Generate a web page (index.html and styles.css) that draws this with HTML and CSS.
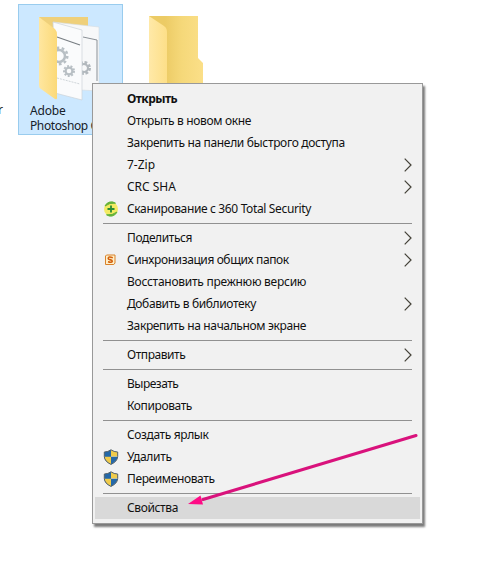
FILE: index.html
```html
<!DOCTYPE html>
<html lang="ru">
<head>
<meta charset="utf-8">
<title>Контекстное меню</title>
<link rel="stylesheet" href="styles.css">
</head>
<body>
<main class="desktop">
  <span class="cut-label">r</span>
  <section class="file selected">
    <svg class="folder-open" width="64" height="88" viewBox="0 0 64 88">
      <defs>
        <linearGradient id="flap" x1="0" x2="1"><stop offset="0" stop-color="#ffe7a0"/><stop offset="1" stop-color="#fbd978"/></linearGradient>
      </defs>
      <path d="M1 3H50V28H1Z" fill="#efd07a"/>
      <path d="M15 8L61 13V77L43 76Z" fill="#f7f8f9" stroke="#d5dbe0" stroke-width=".6"/>
      <path d="M45 23L59 26V67" fill="none" stroke="#8a9096" stroke-width="1"/>
      <circle cx="46" cy="54" r="5" fill="none" stroke="#b2b8bd" stroke-width="4" stroke-dasharray="2.4 1.5"/>
      <circle cx="46" cy="54" r="4" fill="none" stroke="#b2b8bd" stroke-width="2"/>
      <path d="M15 8L44 16V86L17 79Z" fill="#fafbfc" stroke="#ccd3d9" stroke-width=".7"/>
      <path d="M19 23L42 31" stroke="#777d82" stroke-width="1.3"/>
      <path d="M19 64L42 70" stroke="#cfd5d9" stroke-dasharray="2 1"/>
      <g fill="none" stroke="#b8bfc4">
        <circle cx="21" cy="42" r="6" stroke-width="2.5"/><circle cx="21" cy="42" r="8.3" stroke-width="2.5" stroke-dasharray="2.7 2.5"/>
        <circle cx="31" cy="57" r="3.4" stroke-width="2.2"/><circle cx="31" cy="57" r="5" stroke-width="2" stroke-dasharray="1.9 1.6"/>
      </g>
      <path d="M1 3L17 15Q19 17 19 21V84Q19 86 17 85L3 75Q1 74 1 71Z" fill="url(#flap)"/>
    </svg>
    <p class="file-name">Adobe<br><span class="name-end">Photoshop C</span></p>
  </section>
  <section class="file neighbour">
    <svg width="56" height="80" viewBox="0 0 56 80">
      <defs>
        <linearGradient id="back" x1="0" x2="1"><stop offset=".3" stop-color="#eccb65"/><stop offset=".6" stop-color="#f5d879"/><stop offset="1" stop-color="#fbdf88"/></linearGradient>
        <linearGradient id="front" x1="0" x2="1"><stop offset="0" stop-color="#ffe9a8"/><stop offset="1" stop-color="#fddf88"/></linearGradient>
      </defs>
      <path d="M0 1H49V43L54 48V80H0Z" fill="url(#back)"/>
      <path d="M0 1L15 11Q18 13 18 17V80H0Z" fill="url(#front)"/>
    </svg>
  </section>

  <nav class="menu">
    <div class="item"><b class="t1">Открыть</b></div>
    <div class="item"><span class="t2">Открыть в новом окне</span></div>
    <div class="item"><span class="t3">Закрепить на панели быстрого доступа</span></div>
    <div class="item more"><span class="t4">7-Zip</span><svg class="chevron" viewBox="0 0 8 14"><path d="M.7 .7L7 7L.7 13.3"/></svg></div>
    <div class="item more"><span class="t5">CRC SHA</span><svg class="chevron" viewBox="0 0 8 14"><path d="M.7 .7L7 7L.7 13.3"/></svg></div>
    <div class="item">
      <svg class="icon" viewBox="0 0 16 16"><circle cx="8" cy="8" r="7" fill="#f3ea62"/><path d="M2 5A7 7 0 0 1 12.5 2.2Q6.500 1.500 2 5ZM14 11A7 7 0 0 1 3.500 13.800Q9.500 14.500 14 11Z" fill="#62b23b" stroke="#62b23b"/><path d="M8 4.500V11.500M4.500 8H11.500" stroke="#278c35" stroke-width="1.800"/></svg>
      <span class="t6">Сканирование с 360 Total Security</span>
    </div>
    <hr>
    <div class="item more"><span class="t7">Поделиться</span><svg class="chevron" viewBox="0 0 8 14"><path d="M.7 .7L7 7L.7 13.3"/></svg></div>
    <div class="item more">
      <svg class="icon" viewBox="0 0 16 16"><path d="M3.5 3H12V11L10.8 12.5H2.5V4Z" fill="#fff0c9" stroke="#d9822b"/><path d="M9.8 5.7Q5.2 4.1 5.2 6.4C5.2 8 9.3 7.2 9.3 9.2Q9.1 11 5 9.8" fill="none" stroke="#d3600d" stroke-width="1.6"/></svg>
      <span class="t8">Синхронизация общих папок</span><svg class="chevron" viewBox="0 0 8 14"><path d="M.7 .7L7 7L.7 13.3"/></svg>
    </div>
    <div class="item"><span class="t9">Восстановить прежнюю версию</span></div>
    <div class="item more"><span class="t10">Добавить в библиотеку</span><svg class="chevron" viewBox="0 0 8 14"><path d="M.7 .7L7 7L.7 13.3"/></svg></div>
    <div class="item"><span class="t11">Закрепить на начальном экране</span></div>
    <hr>
    <div class="item more"><span class="t12">Отправить</span><svg class="chevron" viewBox="0 0 8 14"><path d="M.7 .7L7 7L.7 13.3"/></svg></div>
    <hr>
    <div class="item"><span class="t13">Вырезать</span></div>
    <div class="item"><span class="t14">Копировать</span></div>
    <hr>
    <div class="item"><span class="t15">Создать ярлык</span></div>
    <div class="item">
      <svg class="icon" viewBox="0 0 16 16"><path d="M8 .8Q5 3 1.3 3V7.5Q1.5 12.5 8 15.4Z" fill="#2468a8"/><path d="M8 .8Q11 3 14.7 3V7.5H8ZM1.3 7.8H8V15.4Q2 12.5 1.3 7.8Z" fill="#f0cb4b"/><path d="M8 7.8H14.7Q14 12.5 8 15.4Z" fill="#2468a8"/><path d="M8 .8Q5 3 1.3 3V7.5Q1.5 12.5 8 15.4Q14.5 12.5 14.7 7.5V3Q11 3 8 .8Z" fill="none" stroke="#53616a"/></svg>
      <span class="t16">Удалить</span>
    </div>
    <div class="item">
      <svg class="icon" viewBox="0 0 16 16"><path d="M8 .8Q5 3 1.3 3V7.5Q1.5 12.5 8 15.4Z" fill="#2468a8"/><path d="M8 .8Q11 3 14.7 3V7.5H8ZM1.3 7.8H8V15.4Q2 12.5 1.3 7.8Z" fill="#f0cb4b"/><path d="M8 7.8H14.7Q14 12.5 8 15.4Z" fill="#2468a8"/><path d="M8 .8Q5 3 1.3 3V7.5Q1.5 12.5 8 15.4Q14.5 12.5 14.7 7.5V3Q11 3 8 .8Z" fill="none" stroke="#53616a"/></svg>
      <span class="t17">Переименовать</span>
    </div>
    <hr>
    <div class="item active"><span class="t18">Свойства</span></div>
  </nav>
  <svg class="arrow" width="235" height="80" viewBox="0 0 235 80"><path d="M229 5.5L16 69.5" stroke="#d9127c" stroke-width="3" stroke-linecap="round"/><path d="M1 74L13.500 65.500L16 74.500Z" fill="#ff0b86"/></svg>
</main>
</body>
</html>
```
FILE: styles.css
```css
* { box-sizing: border-box; }
body { margin: 0; background: #fff; overflow: hidden; font: 12px/22px "Noto Sans", sans-serif; color: #111; }
.desktop { position: relative; width: 487px; height: 567px; display: flex; align-items: flex-start; }
.cut-label { width: 18px; padding-top: 99px; text-indent: -2px; color: #222; }
.file.selected { width: 105px; height: 131px; margin-top: 4px; border: 1px solid #99ccee; background: #cce8ff; }
.folder-open { display: block; margin: 9px 0 0 19px; }
.file-name { margin: 1px 0 0 11px; font-size: 12px; line-height: 15px; white-space: nowrap; color: #16202a; letter-spacing: -.2px; }
.name-end { letter-spacing: -.4px; }
.neighbour { margin: 15px 0 0 26px; }
.menu { position: absolute; left: 92px; top: 83px; width: 331px; height: 441px; padding: 4px 2px; border: 1px solid #999; background: #f1f1f1; box-shadow: 2px 3px 2px rgba(0,0,0,.52); }
.item { display: grid; grid-template-columns: 32px 1fr 12px; align-items: center; height: 22px; white-space: nowrap; }
.item > span, .item > b { grid-column: 2; grid-row: 1; justify-self: start; }
.icon { grid-column: 1; grid-row: 1; width: 16px; height: 16px; margin-left: 8px; }
.chevron { grid-column: 3; grid-row: 1; width: 8px; height: 14px; margin-left: -4px; fill: none; stroke: #444238; stroke-width: 1.2; }
.active { background: #d9d9d9; }
hr { height: 1px; margin: 3px 8px; border: 0; background: #919191; }
.arrow { position: absolute; left: 187px; top: 430px; }

/* Tracking keeps the labels as compact as the system menu font. */
.t1 { letter-spacing: -.55px; }
.t2, .t3 { letter-spacing: -.34px; }
.t6, .t11 { letter-spacing: -.36px; }
.t7, .t8, .t14 { letter-spacing: -.4px; }
.t9 { letter-spacing: -.26px; }
.t10, .t15, .t17, .t18 { letter-spacing: -.38px; }
.t12 { letter-spacing: -.44px; }
.t13 { letter-spacing: -.5px; }
.t16 { letter-spacing: -.3px; }
```
